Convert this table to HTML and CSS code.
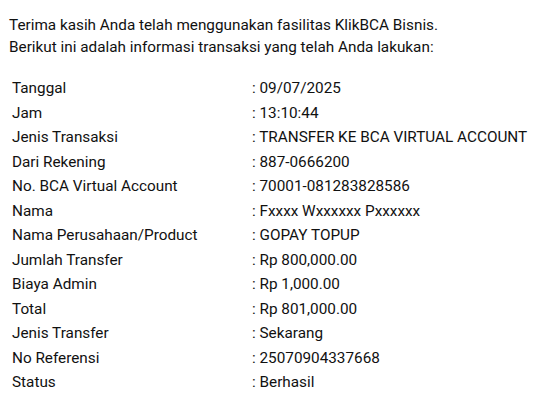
FILE: index.html
```html
<!DOCTYPE html>
<html>
<head>
<meta charset="utf-8">
<link rel="stylesheet" href="styles.css">
</head>
<body>
<div class="intro">
<p>Terima kasih Anda telah menggunakan fasilitas KlikBCA Bisnis.</p>
<p>Berikut ini adalah informasi transaksi yang telah Anda lakukan:</p>
</div>
<div class="details">
<div class="lbl">Tanggal</div><div class="val">: 09/07/2025</div>
<div class="lbl">Jam</div><div class="val">: 13:10:44</div>
<div class="lbl">Jenis Transaksi</div><div class="val">: TRANSFER KE BCA VIRTUAL ACCOUNT</div>
<div class="lbl">Dari Rekening</div><div class="val">: 887-0666200</div>
<div class="lbl">No. BCA Virtual Account</div><div class="val">: 70001-081283828586</div>
<div class="lbl">Nama</div><div class="val">: Fxxxx Wxxxxxx Pxxxxxx</div>
<div class="lbl">Nama Perusahaan/Product</div><div class="val">: GOPAY TOPUP</div>
<div class="lbl">Jumlah Transfer</div><div class="val">: Rp 800,000.00</div>
<div class="lbl">Biaya Admin</div><div class="val">: Rp 1,000.00</div>
<div class="lbl">Total</div><div class="val">: Rp 801,000.00</div>
<div class="lbl">Jenis Transfer</div><div class="val">: Sekarang</div>
<div class="lbl">No Referensi</div><div class="val">: 25070904337668</div>
<div class="lbl">Status</div><div class="val">: Berhasil</div>
</div>
</body>
</html>
```
FILE: styles.css
```css
html, body {
  margin: 0;
  background: #fff;
}
body {
  padding: 14px 9px;
  font-family: Roboto, "Liberation Sans", sans-serif;
  font-size: 15.3px;
  color: #111;
}
.intro p {
  margin: 0;
  line-height: 22px;
}
.details {
  margin-top: 18px;
  margin-left: 3px;
  display: grid;
  grid-template-columns: 240px auto;
  grid-auto-rows: 24.5px;
  align-items: center;
}
```
